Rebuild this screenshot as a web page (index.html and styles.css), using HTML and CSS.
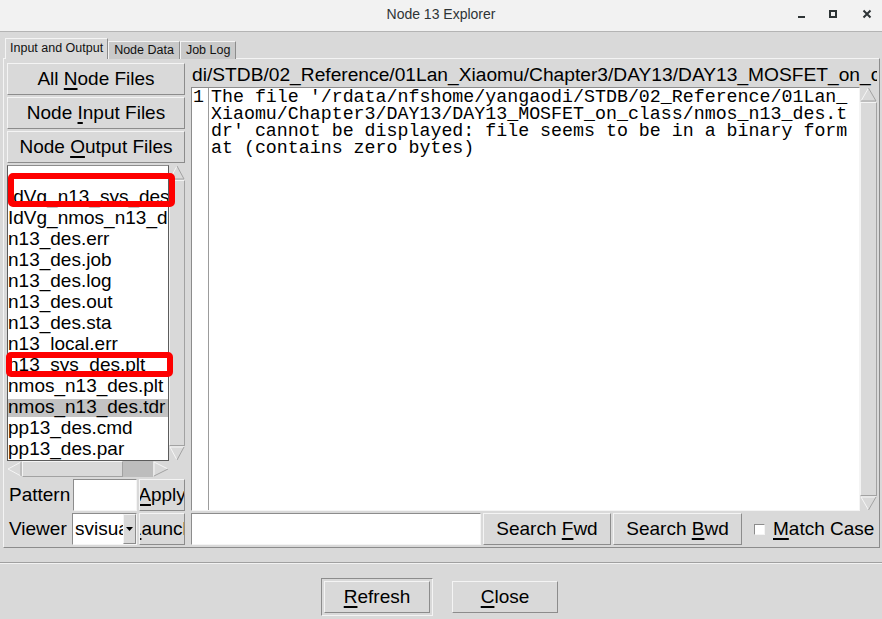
FILE: index.html
```html
<!DOCTYPE html>
<html lang="en">
<head>
<meta charset="utf-8">
<title>Node 13 Explorer</title>
<link rel="stylesheet" href="styles.css">
</head>
<body>
<header class="titlebar">
  <div></div>
  <div class="title">Node 13 Explorer</div>
  <div class="wm">
    <svg class="wm-min" width="10" height="10" viewBox="0 0 10 10"><rect x="1" y="7" width="7" height="2" fill="#2e3436"/></svg>
    <svg class="wm-max" width="10" height="10" viewBox="0 0 10 10"><rect x="2" y="2" width="6" height="6" fill="none" stroke="#2e3436" stroke-width="2"/></svg>
    <svg class="wm-close" width="10" height="10" viewBox="0 0 10 10"><path d="M1.5 1.5 L8.5 8.5 M8.5 1.5 L1.5 8.5" stroke="#2e3436" stroke-width="2" fill="none"/></svg>
  </div>
</header>

<div class="content">
  <div class="tabs">
    <div class="tab active">Input and Output</div>
    <div class="tab">Node Data</div>
    <div class="tab">Job Log</div>
  </div>

  <div class="panel">
    <div class="left">
      <div class="btn big"><span>All <u>N</u>ode Files</span></div>
      <div class="btn big"><span>Node <u>I</u>nput Files</span></div>
      <div class="btn big"><span>Node <u>O</u>utput Files</span></div>

      <div class="listarea">
        <div class="listrow">
          <div class="listbox">
            <div class="item blank"></div>
            <div class="item">IdVg_n13_sys_des.plt</div>
            <div class="item">IdVg_nmos_n13_des.plt</div>
            <div class="item">n13_des.err</div>
            <div class="item">n13_des.job</div>
            <div class="item">n13_des.log</div>
            <div class="item">n13_des.out</div>
            <div class="item">n13_des.sta</div>
            <div class="item">n13_local.err</div>
            <div class="item">n13_sys_des.plt</div>
            <div class="item">nmos_n13_des.plt</div>
            <div class="item selected">nmos_n13_des.tdr</div>
            <div class="item">pp13_des.cmd</div>
            <div class="item">pp13_des.par</div>
          </div>
          <div class="vsb">
            <svg class="arrow" width="16" height="15" viewBox="0 0 16 15"><polygon points="8,1 15,14 1,14" fill="#d9d9d9"/><polyline points="1,14 8,1" fill="none" stroke="#f6f6f6"/><polyline points="8,1 15,14 1,14" fill="none" stroke="#a2a2a2"/></svg>
            <div class="thumb"></div>
            <svg class="arrow" width="16" height="15" viewBox="0 0 16 15"><polygon points="1,1 15,1 8,14" fill="#d9d9d9"/><polyline points="8,14 1,1 15,1" fill="none" stroke="#f6f6f6"/><polyline points="15,1 8,14" fill="none" stroke="#a2a2a2"/></svg>
          </div>
        </div>
        <div class="hrow">
          <div class="hsb">
            <svg class="arrow" width="15" height="16" viewBox="0 0 15 16"><polygon points="1,8 14,1 14,15" fill="#d9d9d9"/><polyline points="14,1 1,8 14,15" fill="none" stroke="#f6f6f6"/><polyline points="14,1 14,15" fill="none" stroke="#a2a2a2"/></svg>
            <div class="hthumb"></div>
            <div class="htrough"></div>
            <svg class="arrow" width="16" height="16" viewBox="0 0 16 16"><polygon points="1,1 15,8 1,15" fill="#d9d9d9"/><polyline points="1,15 1,1 15,8" fill="none" stroke="#f6f6f6"/><polyline points="15,8 1,15" fill="none" stroke="#a2a2a2"/></svg>
          </div>
          <div class="corner"></div>
        </div>
        <div class="redbox box1"></div>
        <div class="redbox box2"></div>
      </div>

      <div class="formrow">
        <div class="flabel">Pattern</div>
        <div class="entry pattern"></div>
        <div class="btn small"><span><u>A</u>pply</span></div>
      </div>
      <div class="formrow">
        <div class="flabel viewer">Viewer</div>
        <div class="combo">
          <div class="combo-text">svisual</div>
          <div class="combo-btn"><svg width="7" height="4" viewBox="0 0 7 4"><polygon points="0,0 7,0 3.5,4" fill="#000"/></svg></div>
        </div>
        <div class="btn small"><span><u>L</u>aunch</span></div>
      </div>
    </div>

    <div class="right">
      <div class="pathlabel">di/STDB/02_Reference/01Lan_Xiaomu/Chapter3/DAY13/DAY13_MOSFET_on_class/nmos_n13_des.tdr</div>
      <div class="textwrap">
        <div class="textview">
          <div class="gutter">1</div>
          <pre class="tbody">The file '/rdata/nfshome/yangaodi/STDB/02_Reference/01Lan_
Xiaomu/Chapter3/DAY13/DAY13_MOSFET_on_class/nmos_n13_des.t
dr' cannot be displayed: file seems to be in a binary form
at (contains zero bytes)</pre>
        </div>
        <div class="vsb tvsb">
          <svg class="arrow" width="17" height="15" viewBox="0 0 17 15"><polygon points="8.5,1 16,14 1,14" fill="#d9d9d9"/><polyline points="1,14 8.5,1" fill="none" stroke="#f6f6f6"/><polyline points="8.5,1 16,14 1,14" fill="none" stroke="#a2a2a2"/></svg>
          <div class="thumb"></div>
          <svg class="arrow" width="17" height="15" viewBox="0 0 17 15"><polygon points="1,1 16,1 8.5,14" fill="#d9d9d9"/><polyline points="8.5,14 1,1 16,1" fill="none" stroke="#f6f6f6"/><polyline points="16,1 8.5,14" fill="none" stroke="#a2a2a2"/></svg>
        </div>
      </div>
      <div class="searchrow">
        <div class="entry search"></div>
        <div class="btn sbtn fwd"><span>Search <u>F</u>wd</span></div>
        <div class="btn sbtn bwd"><span>Search <u>B</u>wd</span></div>
        <div class="matchcase"><div class="check"></div><span><u>M</u>atch Case</span></div>
      </div>
    </div>
  </div>

  <div class="sep"></div>

  <div class="bottombar">
    <div class="defring"><div class="btn dbtn"><span><u>R</u>efresh</span></div></div>
    <div class="btn dbtn close"><span><u>C</u>lose</span></div>
  </div>
</div>
</body>
</html>
```

FILE: styles.css
```css
* { box-sizing: border-box; }
html, body { margin: 0; padding: 0; }
body {
  width: 882px;
  height: 619px;
  overflow: hidden;
  background: #d9d9d9;
  font-family: "Liberation Sans", Arial, sans-serif;
  color: #000;
}

u {
  text-decoration: underline;
  text-decoration-thickness: 2px;
  text-underline-offset: 3px;
}

/* ---------- title bar ---------- */
.titlebar {
  height: 32px;
  background: #f2f2f2;
  border-bottom: 1px solid #b4b4b4;
  display: grid;
  grid-template-columns: 1fr auto 1fr;
  align-items: center;
}
.title {
  font-size: 14px;
  line-height: 16px;
  color: #2e3436;
  margin-top: -3px;
}
.wm {
  justify-self: end;
  display: flex;
  align-items: center;
  padding-right: 10px;
  margin-top: -3px;
}
.wm-max { margin-left: 21px; }
.wm-close { margin-left: 24px; }

/* ---------- content ---------- */
.content { padding: 6px 2px 0 3px; }

.tabs {
  display: flex;
  align-items: flex-end;
  height: 21px;
  margin-left: 2px;
  margin-bottom: -1px;
  position: relative;
  z-index: 1;
}
.tab {
  height: 18px;
  padding: 0 5px;
  font-size: 12.5px;
  line-height: 16px;
  white-space: nowrap;
  border: 1px solid;
  border-bottom: none;
  border-color: #f4f4f4 #8c8c8c transparent #f4f4f4;
  background: #c9c9c9;
  color: #111;
}
.tab.active {
  height: 21px;
  padding: 1px 4px 0;
  background: #d9d9d9;
}

.panel {
  height: 490px;
  border: 1px solid;
  border-color: #f4f4f4 #8c8c8c #8c8c8c #f4f4f4;
  display: flex;
  gap: 6px;
  padding: 4px 2px 0 3px;
}

/* ---------- generic widgets ---------- */
.btn {
  background: #d9d9d9;
  border: 1px solid;
  border-color: #f4f4f4 #8c8c8c #8c8c8c #f4f4f4;
  display: flex;
  align-items: center;
  justify-content: center;
  overflow: hidden;
  white-space: nowrap;
  font-size: 19px;
}
.btn span { flex: none; }

.entry {
  background: #fff;
  border: 1px solid;
  border-color: #8c8c8c #f4f4f4 #f4f4f4 #8c8c8c;
}

/* ---------- left column ---------- */
.left {
  width: 178px;
  flex: none;
  display: flex;
  flex-direction: column;
  gap: 2px;
}
.big { height: 32px; }

.listarea {
  position: relative;
  height: 312px;
  display: flex;
  flex-direction: column;
}
.listrow { display: flex; height: 296px; }
.listbox {
  flex: 1;
  background: #fff;
  border: 1px solid #5c5c5c;
  border-top-color: #8c8c8c;
  overflow: hidden;
  font-size: 19px;
}
.item {
  height: 21px;
  line-height: 21px;
  white-space: nowrap;
}
.item.blank { height: 20px; }
.item.selected {
  background: linear-gradient(#c3c3c3, #c3c3c3) 0 3px / 100% 18px no-repeat;
}

.vsb {
  width: 16px;
  flex: none;
  display: flex;
  flex-direction: column;
  background: #c3c3c3;
}
.vsb .arrow { display: block; flex: none; background: #d9d9d9; }
.thumb {
  flex: 1;
  background: #d9d9d9;
  border: 1px solid;
  border-color: #f4f4f4 #a2a2a2 #a2a2a2 #f4f4f4;
}

.hrow { display: flex; height: 16px; }
.hsb {
  flex: 1;
  display: flex;
  background: #c3c3c3;
}
.hsb .arrow { display: block; flex: none; background: #d9d9d9; }
.hthumb {
  width: 101px;
  background: #d9d9d9;
  border: 1px solid;
  border-color: #f4f4f4 #a2a2a2 #a2a2a2 #f4f4f4;
}
.htrough { flex: 1; background: #bdbdbd; }
.corner { width: 16px; }

.redbox {
  position: absolute;
  border: 6px solid #fe0000;
  border-radius: 5px;
  width: 167px;
}
.box1 { left: 1px; top: 8px; height: 34px; }
.box2 { left: -1px; top: 187px; height: 25px; }

.formrow { display: flex; height: 32px; }
.flabel {
  width: 66px;
  padding-left: 2px;
  font-size: 19px;
  display: flex;
  align-items: center;
}
.flabel.viewer { width: 65px; }
.pattern { width: 64px; }
.small { width: 46px; margin-left: 2px; }

.combo {
  width: 65px;
  display: flex;
  background: #fff;
  border: 1px solid;
  border-color: #8c8c8c #f4f4f4 #f4f4f4 #8c8c8c;
  overflow: hidden;
}
.combo-text {
  flex: 1;
  overflow: hidden;
  white-space: nowrap;
  font-size: 19px;
  line-height: 29px;
  padding-left: 2px;
}
.combo-btn {
  width: 13px;
  flex: none;
  background: #d9d9d9;
  border: 1px solid;
  border-color: #f4f4f4 #8c8c8c #8c8c8c #f4f4f4;
  display: flex;
  align-items: center;
  justify-content: center;
}

/* ---------- right column ---------- */
.right {
  flex: 1;
  min-width: 0;
  display: flex;
  flex-direction: column;
}
.pathlabel {
  height: 24px;
  line-height: 24px;
  font-size: 19.2px;
  white-space: nowrap;
  overflow: hidden;
  margin-left: -3px;
  padding-left: 4px;
}
.textwrap { height: 424px; display: flex; }
.textview {
  flex: 1;
  display: flex;
  background: #fff;
  border: 1px solid;
  border-color: #8c8c8c #f4f4f4 #f4f4f4 #8c8c8c;
  font-family: "Liberation Mono", "Courier New", monospace;
  font-size: 18.3px;
  line-height: 17px;
  color: #000;
}
.gutter {
  width: 17px;
  flex: none;
  padding: 1px 0 0 1px;
  border-right: 1px solid #9c9c9c;
}
.tbody {
  margin: 0;
  padding: 1px 0 0 2px;
  font: inherit;
  white-space: pre;
}
.tvsb { width: 17px; }

.searchrow {
  display: flex;
  height: 32px;
  gap: 2px;
  margin-top: 2px;
}
.search { width: 290px; }
.fwd { width: 128px; }
.bwd { width: 129px; }
.matchcase {
  display: flex;
  align-items: center;
  padding-left: 10px;
  gap: 8px;
  font-size: 19px;
  white-space: nowrap;
}
.check {
  width: 11px;
  height: 11px;
  background: #fff;
  border: 1px solid;
  border-color: #8c8c8c #f4f4f4 #f4f4f4 #8c8c8c;
}

/* ---------- bottom ---------- */
.sep {
  margin-top: 14px;
  margin-left: -3px;
  margin-right: -2px;
  border-top: 1px solid #a0a0a0;
  border-bottom: 1px solid #f2f2f2;
}
.bottombar {
  display: flex;
  justify-content: center;
  align-items: flex-start;
  gap: 19px;
  padding-top: 14px;
  padding-right: 4px;
}
.defring {
  padding: 2px;
  border: 1px solid;
  border-color: #8c8c8c #f4f4f4 #f4f4f4 #8c8c8c;
}
.dbtn { width: 106px; height: 32px; }
.close { margin-top: 3px; }
```
